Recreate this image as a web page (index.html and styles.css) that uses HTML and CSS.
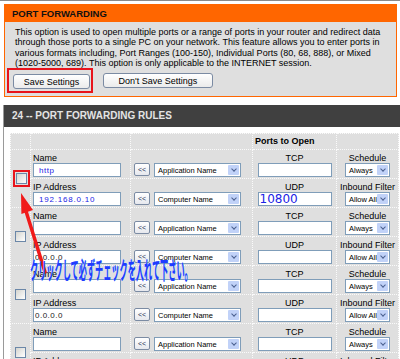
FILE: index.html
```html
<!DOCTYPE html>
<html lang="en">
<head>
    <meta charset="UTF-8">
    <meta name="viewport" content="width=device-width, initial-scale=1.0">
    <title>Port Forwarding</title>
    <link rel="stylesheet" href="styles.css">
</head>
<body>
    <div class="box intro">
        <h1>PORT FORWARDING</h1>
        <div class="intro-body">
            <p>This option is used to open multiple ports or a range of ports in your router and redirect data through those ports to a single PC on your network. This feature allows you to enter ports in various formats including, Port Ranges (100-150), Individual Ports (80, 68, 888), or Mixed (1020-5000, 689). This option is only applicable to the INTERNET session.</p>
            <div class="actions">
                <span class="mark"><button class="btn btn-save" type="button">Save Settings</button></span>
                <button class="btn btn-cancel" type="button">Don't Save Settings</button>
            </div>
        </div>
    </div>

    <div class="box rules">
        <h2>24 -- PORT FORWARDING RULES</h2>
        <div class="rules-body">
            <table class="grid">
                <colgroup>
                    <col class="c-chk"><col class="c-name"><col class="c-pick"><col class="c-port"><col class="c-opt">
                </colgroup>
                <tr class="head">
                    <td></td><td></td><td></td><td class="ports-head">Ports to Open</td><td></td>
                </tr>

                <!-- rule 1 -->
                <tr>
                    <td class="chk-cell" rowspan="2"><span class="mark-chk"><span class="chk"></span></span></td>
                    <td class="name-cell"><div class="lbl">Name</div><input class="txt blue" type="text" value="http"></td>
                    <td class="pick"><button class="back" type="button">&lt;&lt;</button><span class="sel sel-wide"><span class="sel-text">Application Name</span><span class="sel-arr"></span></span></td>
                    <td class="port"><div class="lbl">TCP</div><input class="txt port-in" type="text"></td>
                    <td class="opt"><div class="lbl">Schedule</div><span class="sel sel-small"><span class="sel-text">Always</span><span class="sel-arr"></span></span></td>
                </tr>
                <tr>
                    <td class="name-cell"><div class="lbl">IP Address</div><input class="txt blue ip" type="text" value="192.168.0.10"></td>
                    <td class="pick"><button class="back" type="button">&lt;&lt;</button><span class="sel sel-wide"><span class="sel-text">Computer Name</span><span class="sel-arr"></span></span></td>
                    <td class="port"><div class="lbl">UDP</div><input class="txt port-in big" type="text" value="10800"></td>
                    <td class="opt"><div class="lbl">Inbound Filter</div><span class="sel sel-small"><span class="sel-text">Allow All</span><span class="sel-arr"></span></span></td>
                </tr>

                <!-- rule 2 -->
                <tr>
                    <td class="chk-cell" rowspan="2"><span class="chk"></span></td>
                    <td class="name-cell"><div class="lbl">Name</div><input class="txt" type="text"></td>
                    <td class="pick"><button class="back" type="button">&lt;&lt;</button><span class="sel sel-wide"><span class="sel-text">Application Name</span><span class="sel-arr"></span></span></td>
                    <td class="port"><div class="lbl">TCP</div><input class="txt port-in" type="text"></td>
                    <td class="opt"><div class="lbl">Schedule</div><span class="sel sel-small"><span class="sel-text">Always</span><span class="sel-arr"></span></span></td>
                </tr>
                <tr>
                    <td class="name-cell"><div class="lbl">IP Address</div><input class="txt" type="text" value="0.0.0.0"></td>
                    <td class="pick"><button class="back" type="button">&lt;&lt;</button><span class="sel sel-wide"><span class="sel-text">Computer Name</span><span class="sel-arr"></span></span></td>
                    <td class="port"><div class="lbl">UDP</div><input class="txt port-in" type="text"></td>
                    <td class="opt"><div class="lbl">Inbound Filter</div><span class="sel sel-small"><span class="sel-text">Allow All</span><span class="sel-arr"></span></span></td>
                </tr>

                <!-- rule 3 -->
                <tr>
                    <td class="chk-cell" rowspan="2"><span class="chk"></span></td>
                    <td class="name-cell"><div class="lbl">Name</div><input class="txt" type="text"></td>
                    <td class="pick"><button class="back" type="button">&lt;&lt;</button><span class="sel sel-wide"><span class="sel-text">Application Name</span><span class="sel-arr"></span></span></td>
                    <td class="port"><div class="lbl">TCP</div><input class="txt port-in" type="text"></td>
                    <td class="opt"><div class="lbl">Schedule</div><span class="sel sel-small"><span class="sel-text">Always</span><span class="sel-arr"></span></span></td>
                </tr>
                <tr>
                    <td class="name-cell"><div class="lbl">IP Address</div><input class="txt" type="text" value="0.0.0.0"></td>
                    <td class="pick"><button class="back" type="button">&lt;&lt;</button><span class="sel sel-wide"><span class="sel-text">Computer Name</span><span class="sel-arr"></span></span></td>
                    <td class="port"><div class="lbl">UDP</div><input class="txt port-in" type="text"></td>
                    <td class="opt"><div class="lbl">Inbound Filter</div><span class="sel sel-small"><span class="sel-text">Allow All</span><span class="sel-arr"></span></span></td>
                </tr>

                <!-- rule 4 -->
                <tr>
                    <td class="chk-cell" rowspan="2"><span class="chk"></span></td>
                    <td class="name-cell"><div class="lbl">Name</div><input class="txt" type="text"></td>
                    <td class="pick"><button class="back" type="button">&lt;&lt;</button><span class="sel sel-wide"><span class="sel-text">Application Name</span><span class="sel-arr"></span></span></td>
                    <td class="port"><div class="lbl">TCP</div><input class="txt port-in" type="text"></td>
                    <td class="opt"><div class="lbl">Schedule</div><span class="sel sel-small"><span class="sel-text">Always</span><span class="sel-arr"></span></span></td>
                </tr>
                <tr>
                    <td class="name-cell"><div class="lbl">IP Address</div><input class="txt" type="text" value="0.0.0.0"></td>
                    <td class="pick"><button class="back" type="button">&lt;&lt;</button><span class="sel sel-wide"><span class="sel-text">Computer Name</span><span class="sel-arr"></span></span></td>
                    <td class="port"><div class="lbl">UDP</div><input class="txt port-in" type="text"></td>
                    <td class="opt"><div class="lbl">Inbound Filter</div><span class="sel sel-small"><span class="sel-text">Allow All</span><span class="sel-arr"></span></span></td>
                </tr>
            </table>
        </div>
    </div>

    <!-- hand-drawn annotation on top of the screenshot -->
    <svg class="pointer" width="40" height="90" viewBox="0 0 40 90">
        <line x1="31" y1="84" x2="11" y2="20" stroke="#f01a1a" stroke-width="3.5" stroke-linecap="round"/>
        <polygon points="7,5 19,22 7.4,26" fill="#f01a1a"/>
    </svg>
    <div class="note">クリックして必ずチェックを入れて下さい。</div>
</body>
</html>
```

FILE: styles.css
```css
html, body {
    margin: 0;
    overflow: hidden;
}
body {
    background-color: #fff;
    border-top: 1px solid #8a8a8a;
    padding-top: 3px;
    font-family: "Liberation Sans", Arial, sans-serif;
    font-size: 9px;
    color: #000;
}

/* intro box */
.intro {
    margin-left: 4px;
    width: 391px;
    border: 1px solid #ff6600;
    background-color: #dfdfdf;
}
.intro h1 {
    margin: 0;
    padding-left: 7px;
    background-color: #ff6600;
    color: #111;
    font-size: 9.5px;
    line-height: 17px;
}
.intro-body {
    padding: 5px 0 3px 2px;
}
.intro-body p {
    margin: 0 0 0 8px;
    width: 378px;
    line-height: 10.25px;
}
.actions {
    display: flex;
    align-items: center;
    gap: 10px;
}
.mark {
    display: inline-flex;
    border: 2px solid #e8141c;
    padding: 4px 1px 2px 4px;
}
.btn {
    height: 15px;
    padding: 0;
    border: 1px solid #7b8ba3;
    border-radius: 3px;
    background: linear-gradient(#fff, #ebebeb);
    font-family: inherit;
    font-size: 9px;
    color: #000;
}
.btn-save {
    width: 77px;
}
.btn-cancel {
    width: 110px;
}

/* rules box */
.rules {
    margin: 8px 0 0 3px;
    width: 420px;
    border-left: 1px solid #9a9a9a;
}
.rules h2 {
    margin: 0;
    padding-left: 8px;
    background-color: #404040;
    color: #e4e4e4;
    font-size: 10px;
    line-height: 22px;
}
.rules-body {
    padding: 6px 0 0 6px;
}
.grid {
    width: 388px;
    table-layout: fixed;
    border-collapse: collapse;
    background-color: #dfdfdf;
}
.c-chk { width: 20px; }
.c-name { width: 100px; }
.c-pick { width: 122px; }
.c-port { width: 84px; }
.c-opt { width: 62px; }

.grid td {
    height: 27px;
    padding: 0 2px 1px;
    border: 1px dotted #fafafa;
    vertical-align: bottom;
}
.grid .head td {
    height: 14px;
    vertical-align: middle;
}
.ports-head {
    font-weight: bold;
}
.lbl {
    line-height: 10px;
    white-space: nowrap;
}

.txt {
    display: block;
    box-sizing: border-box;
    width: 88px;
    height: 14px;
    margin: 0;
    padding: 0 1px;
    border: 1px solid #7f9db9;
    background-color: #fff;
    font-family: inherit;
    font-size: 8px;
    letter-spacing: 0.5px;
    color: #222;
}
.txt.blue {
    padding-left: 5px;
    color: #1a22e6;
}
.txt.ip {
    letter-spacing: 0.8px;
}

.chk-cell {
    text-align: center;
    vertical-align: middle !important;
}
.chk {
    display: inline-block;
    vertical-align: middle;
    box-sizing: border-box;
    width: 11px;
    height: 11px;
    border: 1px solid #6b87a8;
    background: linear-gradient(135deg, #d4d4cf, #fff);
}
.mark-chk {
    display: inline-flex;
    border: 2px solid #e8141c;
    padding: 1px;
}

.pick {
    padding-left: 3px !important;
}
.pick .back, .pick .sel {
    vertical-align: bottom;
}
.back {
    box-sizing: border-box;
    width: 16px;
    height: 13px;
    margin: 0 4px 1px 0;
    padding: 0;
    border: 1px solid #7b8ba3;
    border-radius: 2px;
    background: linear-gradient(#fff, #e6e8ee);
    font-family: inherit;
    font-size: 7px;
    line-height: 11px;
    color: #223355;
}
.sel {
    display: inline-flex;
    align-items: center;
    justify-content: space-between;
    box-sizing: border-box;
    height: 14px;
    border: 1px solid #7f9db9;
    background-color: #fff;
}
.sel-wide {
    width: 87px;
}
.sel-small {
    width: 45px;
}
.sel-text {
    padding-left: 3px;
    font-size: 7.5px;
    white-space: nowrap;
}
.sel-arr {
    display: flex;
    align-items: center;
    justify-content: center;
    width: 11px;
    height: 10px;
    margin-right: 1px;
    border-radius: 1px;
    background-color: #c1d2f8;
}
.sel-arr::after {
    content: "";
    width: 3px;
    height: 3px;
    margin-top: -2px;
    border-right: 1.5px solid #4a5f8f;
    border-bottom: 1.5px solid #4a5f8f;
    transform: rotate(45deg);
}

.port, .opt {
    text-align: center;
}
.port-in {
    display: inline-block;
    width: 74px;
}
.port-in.big {
    padding-left: 1px;
    font-family: "DejaVu Sans", sans-serif;
    font-size: 12px;
    letter-spacing: 0;
    line-height: 12px;
    color: #1a22e6;
    text-align: left;
}

/* annotation overlay */
.pointer {
    position: absolute;
    left: 14px;
    top: 188px;
}
.note {
    position: absolute;
    left: 30px;
    top: 257px;
    font-family: "Noto Sans CJK JP", sans-serif;
    font-size: 24px;
    font-weight: bold;
    line-height: 24px;
    color: #1f3bff;
    white-space: nowrap;
    text-shadow: 0 0 1px #a8e8ff;
    transform: scaleX(0.34);
    transform-origin: 0 0;
}
```
